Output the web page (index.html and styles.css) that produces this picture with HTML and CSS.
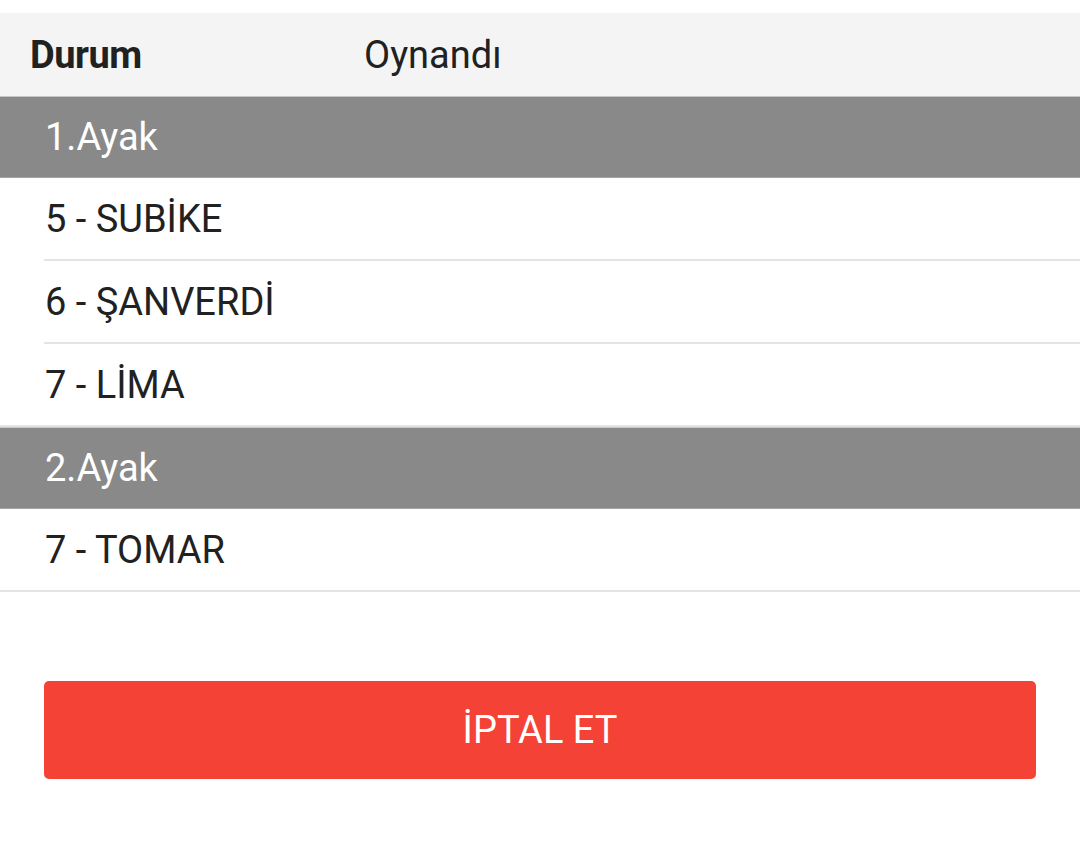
FILE: index.html
```html
<!DOCTYPE html>
<html lang="tr">
<head>
    <meta charset="UTF-8">
    <meta name="viewport" content="width=device-width, initial-scale=1.0">
    <title>Kupon Detayı</title>
    <link rel="stylesheet" href="styles.css">
</head>
<body>
    <div class="page">
        <div class="status-row">
            <span class="status-label">Durum</span>
            <span class="status-value">Oynandı</span>
        </div>

        <div class="leg">
            <div class="leg-title">1.Ayak</div>
            <div class="horse">5 - SUBİKE</div>
            <div class="horse">6 - ŞANVERDİ</div>
            <div class="horse">7 - LİMA</div>
        </div>

        <div class="leg">
            <div class="leg-title">2.Ayak</div>
            <div class="horse">7 - TOMAR</div>
        </div>

        <div class="actions">
            <button class="cancel-btn">İPTAL ET</button>
        </div>
    </div>
</body>
</html>
```

FILE: styles.css
```css
body {
    margin: 0;
    background: #ffffff;
    font-family: 'Roboto', 'Noto Sans', sans-serif;
    color: #212121;
}
.page {
    padding-top: 13px;
}
.status-row {
    display: flex;
    align-items: center;
    height: 83px;
    background: #f4f4f4;
    padding-left: 30px;
    font-size: 38px;
}
.status-label {
    width: 334px;
    font-weight: 700;
    letter-spacing: -0.5px;
}
.status-value {
    font-weight: 400;
}
.leg-title {
    display: flex;
    align-items: center;
    height: 80px;
    padding-left: 45px;
    background: #898989;
    color: #ffffff;
    font-size: 38px;
    border-top: 1px solid #c6c6c6;
    border-bottom: 1px solid #a4a4a4;
}
.horse {
    display: flex;
    align-items: center;
    height: 81px;
    margin-left: 44px;
    padding-left: 1px;
    font-size: 38px;
    border-bottom: 2px solid #e4e4e4;
}
.horse:last-child {
    margin-left: 0;
    padding-left: 45px;
}
.actions {
    padding: 89px 44px 0;
}
.cancel-btn {
    display: block;
    width: 100%;
    height: 98px;
    border: none;
    border-radius: 5px;
    background: #f44336;
    color: #ffffff;
    font-family: 'Roboto', 'Noto Sans', sans-serif;
    font-size: 38px;
    cursor: pointer;
}
```
